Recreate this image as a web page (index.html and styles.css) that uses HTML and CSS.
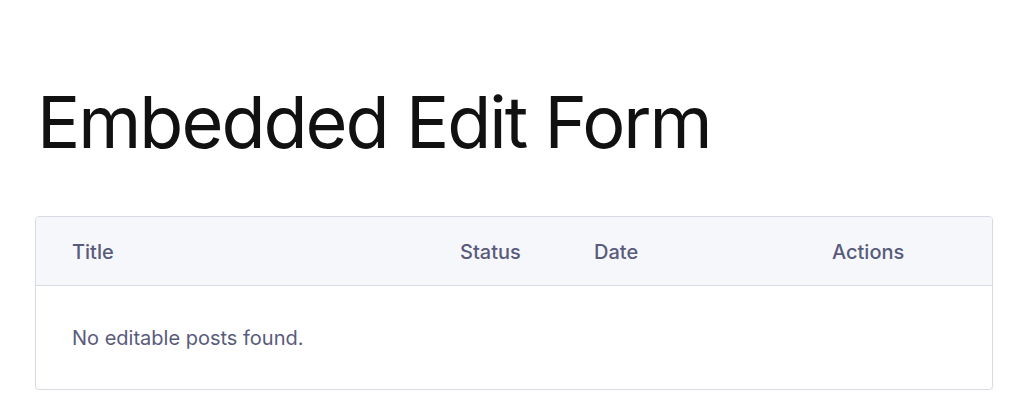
FILE: index.html
```html
<!DOCTYPE html>
<html lang="en">
<head>
<meta charset="utf-8">
<title>Embedded Edit Form</title>
<link rel="stylesheet" href="styles.css">
</head>
<body>
<main class="page">
  <h1 class="page-title">Embedded Edit Form</h1>
  <div class="table-card">
    <table class="posts-table">
      <thead>
        <tr>
          <th class="col-title">Title</th>
          <th class="col-status">Status</th>
          <th class="col-date">Date</th>
          <th class="col-actions">Actions</th>
        </tr>
      </thead>
      <tbody>
        <tr>
          <td class="empty" colspan="4">No editable posts found.</td>
        </tr>
      </tbody>
    </table>
  </div>
</main>
</body>
</html>
```

FILE: styles.css
```css
* { box-sizing: border-box; }
html, body { margin: 0; padding: 0; background: #ffffff; }
body {
  font-family: Inter, "Noto Sans", "Liberation Sans", sans-serif;
  color: #111111;
}
.page {
  padding: 78px 31px 0 35px;
}
.page-title {
  margin: 0 0 50px 2px;
  font-size: 72px;
  font-weight: 400;
  line-height: 88px;
  letter-spacing: -2px;
  color: #111111;
}
.table-card {
  border: 1px solid #d9dae4;
  border-radius: 4px;
  overflow: hidden;
  box-shadow: 0 1px 2px rgba(40, 42, 80, 0.06);
}
.posts-table {
  width: 100%;
  border-collapse: collapse;
  table-layout: fixed;
}
.posts-table thead tr {
  background: #f6f7fb;
  border-bottom: 1px solid #d9dae4;
}
.posts-table th {
  height: 68px;
  padding: 2px 0 0 36px;
  text-align: left;
  font-size: 20px;
  font-weight: 500;
  color: #585b7c;
}
.col-title { width: 388px; }
.col-status { width: 134px; }
.col-date { width: 238px; }
.posts-table td.empty {
  height: 104px;
  padding: 2px 0 0 36px;
  font-size: 20px;
  font-weight: 400;
  color: #585b7c;
}
```
